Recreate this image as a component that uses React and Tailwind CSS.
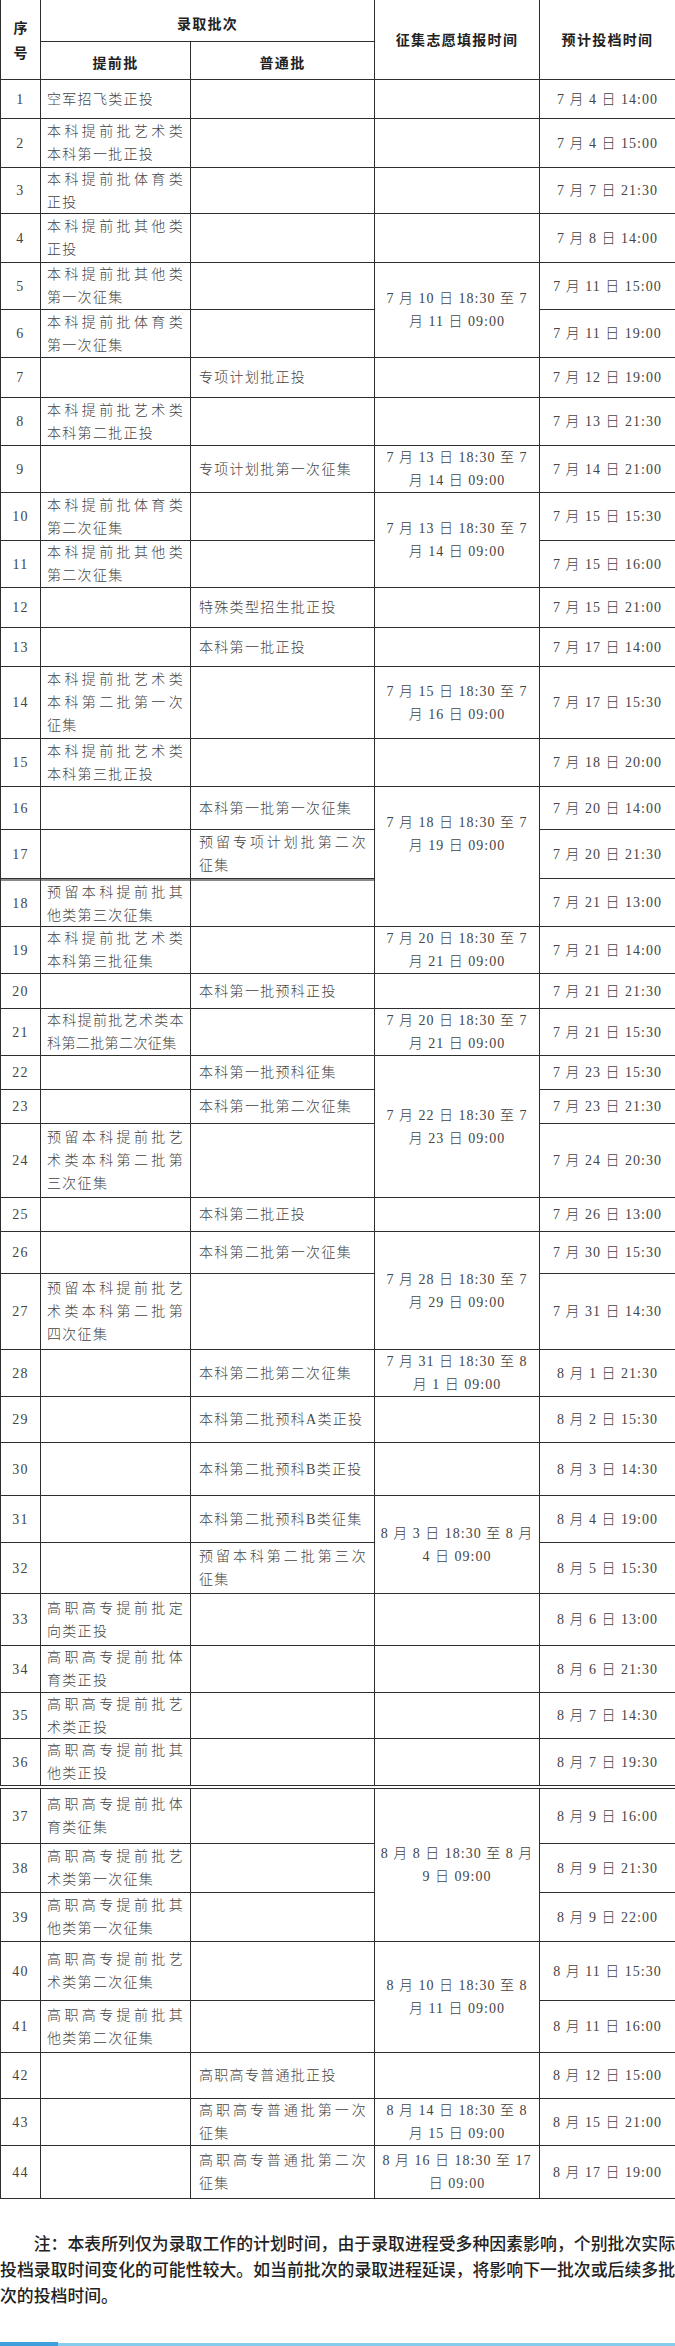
const rows = [
  { a: ['空军招飞类正投'], t: '7 月 4 日 14:00' },
  { a: ['本科提前批艺术类', '本科第一批正投'], t: '7 月 4 日 15:00' },
  { a: ['本科提前批体育类', '正投'], t: '7 月 7 日 21:30' },
  { a: ['本科提前批其他类', '正投'], t: '7 月 8 日 14:00' },
  { a: ['本科提前批其他类', '第一次征集'], t: '7 月 11 日 15:00' },
  { a: ['本科提前批体育类', '第一次征集'], t: '7 月 11 日 19:00' },
  { b: ['专项计划批正投'], t: '7 月 12 日 19:00' },
  { a: ['本科提前批艺术类', '本科第二批正投'], t: '7 月 13 日 21:30' },
  { b: ['专项计划批第一次征集'], t: '7 月 14 日 21:00' },
  { a: ['本科提前批体育类', '第二次征集'], t: '7 月 15 日 15:30' },
  { a: ['本科提前批其他类', '第二次征集'], t: '7 月 15 日 16:00' },
  { b: ['特殊类型招生批正投'], t: '7 月 15 日 21:00' },
  { b: ['本科第一批正投'], t: '7 月 17 日 14:00' },
  { a: ['本科提前批艺术类', '本科第二批第一次', '征集'], t: '7 月 17 日 15:30' },
  { a: ['本科提前批艺术类', '本科第三批正投'], t: '7 月 18 日 20:00' },
  { b: ['本科第一批第一次征集'], t: '7 月 20 日 14:00' },
  { b: ['预留专项计划批第二次', '征集'], t: '7 月 20 日 21:30' },
  { a: ['预留本科提前批其', '他类第三次征集'], t: '7 月 21 日 13:00', dbl: true },
  { a: ['本科提前批艺术类', '本科第三批征集'], t: '7 月 21 日 14:00' },
  { b: ['本科第一批预科正投'], t: '7 月 21 日 21:30' },
  { a: ['本科提前批艺术类本', '科第二批第二次征集'], t: '7 月 21 日 15:30', tight: true },
  { b: ['本科第一批预科征集'], t: '7 月 23 日 15:30' },
  { b: ['本科第一批第二次征集'], t: '7 月 23 日 21:30' },
  { a: ['预留本科提前批艺', '术类本科第二批第', '三次征集'], t: '7 月 24 日 20:30' },
  { b: ['本科第二批正投'], t: '7 月 26 日 13:00' },
  { b: ['本科第二批第一次征集'], t: '7 月 30 日 15:30' },
  { a: ['预留本科提前批艺', '术类本科第二批第', '四次征集'], t: '7 月 31 日 14:30' },
  { b: ['本科第二批第二次征集'], t: '8 月 1 日 21:30' },
  { b: ['本科第二批预科A类正投'], t: '8 月 2 日 15:30' },
  { b: ['本科第二批预科B类正投'], t: '8 月 3 日 14:30' },
  { b: ['本科第二批预科B类征集'], t: '8 月 4 日 19:00' },
  { b: ['预留本科第二批第三次', '征集'], t: '8 月 5 日 15:30' },
  { a: ['高职高专提前批定', '向类正投'], t: '8 月 6 日 13:00' },
  { a: ['高职高专提前批体', '育类正投'], t: '8 月 6 日 21:30' },
  { a: ['高职高专提前批艺', '术类正投'], t: '8 月 7 日 14:30' },
  { a: ['高职高专提前批其', '他类正投'], t: '8 月 7 日 19:30', low: true },
  { a: ['高职高专提前批体', '育类征集'], t: '8 月 9 日 16:00' },
  { a: ['高职高专提前批艺', '术类第一次征集'], t: '8 月 9 日 21:30' },
  { a: ['高职高专提前批其', '他类第一次征集'], t: '8 月 9 日 22:00' },
  { a: ['高职高专提前批艺', '术类第二次征集'], t: '8 月 11 日 15:30' },
  { a: ['高职高专提前批其', '他类第二次征集'], t: '8 月 11 日 16:00' },
  { b: ['高职高专普通批正投'], t: '8 月 12 日 15:00' },
  { b: ['高职高专普通批第一次', '征集'], t: '8 月 15 日 21:00' },
  { b: ['高职高专普通批第二次', '征集'], t: '8 月 17 日 19:00' },
];

// 征集志愿填报时间 column, keyed by row number
const fill = {
  5: { span: 2, lines: ['7 月 10 日 18:30 至 7', '月 11 日 09:00'] },
  9: { span: 1, lines: ['7 月 13 日 18:30 至 7', '月 14 日 09:00'] },
  10: { span: 2, lines: ['7 月 13 日 18:30 至 7', '月 14 日 09:00'] },
  14: { span: 1, lines: ['7 月 15 日 18:30 至 7', '月 16 日 09:00'] },
  16: { span: 3, lines: ['7 月 18 日 18:30 至 7', '月 19 日 09:00'], top: true },
  19: { span: 1, lines: ['7 月 20 日 18:30 至 7', '月 21 日 09:00'] },
  21: { span: 1, lines: ['7 月 20 日 18:30 至 7', '月 21 日 09:00'] },
  22: { span: 3, lines: ['7 月 22 日 18:30 至 7', '月 23 日 09:00'] },
  26: { span: 2, lines: ['7 月 28 日 18:30 至 7', '月 29 日 09:00'] },
  28: { span: 1, lines: ['7 月 31 日 18:30 至 8', '月 1 日 09:00'] },
  31: { span: 2, lines: ['8 月 3 日 18:30 至 8 月', '4 日 09:00'] },
  37: { span: 3, lines: ['8 月 8 日 18:30 至 8 月', '9 日 09:00'] },
  40: { span: 2, lines: ['8 月 10 日 18:30 至 8', '月 11 日 09:00'] },
  43: { span: 1, lines: ['8 月 14 日 18:30 至 8', '月 15 日 09:00'] },
  44: { span: 1, lines: ['8 月 16 日 18:30 至 17', '日 09:00'] },
};
const covered = new Set([6, 11, 17, 18, 23, 24, 27, 32, 38, 39, 41]);

function Lines({ lines, className }) {
  return (
    <div className={`bg-white flex flex-col ${className}`}>
      {lines.map((l, i) => (
        <div
          key={i}
          className={i < lines.length - 1 ? 'text-justify [text-align-last:justify]' : ''}
        >
          {l}
        </div>
      ))}
    </div>
  );
}

function Row({ r, n }) {
  const f = fill[n];
  const dbl = r.dbl ? 'border-t-2 border-[#8a8a8a]' : '';
  return (
    <>
      <div className={`bg-white flex items-center justify-center ${dbl}`}>{n}</div>
      <Lines
        lines={r.a || []}
        className={`pl-[6px] pr-[6px] ${r.low ? 'justify-end' : 'justify-center'} ${
          r.tight ? 'tracking-[0.4px]' : ''
        } ${dbl}`}
      />
      <Lines lines={r.b || []} className={`pl-[8px] pr-[7px] justify-center ${dbl}`} />
      {covered.has(n) ? null : f ? (
        <div
          className={`bg-white flex flex-col items-center text-center tracking-[1px] ${
            f.span === 3 ? 'row-span-3' : f.span === 2 ? 'row-span-2' : ''
          } ${f.top ? 'justify-start pt-[24px]' : 'justify-center'}`}
        >
          {f.lines.map((l, i) => (
            <div key={i}>{l}</div>
          ))}
        </div>
      ) : (
        <div className="bg-white" />
      )}
      <div className="bg-white flex items-center justify-center tracking-[1px]">{r.t}</div>
    </>
  );
}

export default function App() {
  return (
    <div className="w-[675px] bg-white">
      <div className="font-['Liberation_Serif','Noto_Sans_CJK_SC',serif] font-light text-[14px] leading-[23px] text-[#444] tracking-[1.3px]">
        <div className="grid grid-cols-[39px_149px_183px_164px_135px] grid-rows-[41px_37px_38px_48px_45px_48px_46px_47px_39px_47px_46px_47px_46px_39px_38px_71px_47px_42px_48px_47px_46px_34px_46px_33px_33px_73px_33px_41px_75px_46px_45px_52px_46px_50px_51px_46px_45px_46px] gap-px bg-[#2e2e2e] pl-px pb-px">
          <div className="row-span-2 bg-white flex flex-col items-center justify-center font-['Noto_Sans_CJK_SC',sans-serif] font-bold text-[#222] leading-[25px] tracking-normal">
            <span>序</span>
            <span>号</span>
          </div>
          <div className="col-span-2 bg-white flex items-center justify-center pt-[6px] font-['Noto_Sans_CJK_SC',sans-serif] font-bold text-[#222]">
            录取批次
          </div>
          <div className="row-span-2 bg-white flex items-center justify-center font-['Noto_Sans_CJK_SC',sans-serif] font-bold text-[#222]">
            征集志愿填报时间
          </div>
          <div className="row-span-2 bg-white flex items-center justify-center font-['Noto_Sans_CJK_SC',sans-serif] font-bold text-[#222]">
            预计投档时间
          </div>
          <div className="bg-white flex items-center justify-center pt-[4px] font-['Noto_Sans_CJK_SC',sans-serif] font-bold text-[#222]">
            提前批
          </div>
          <div className="bg-white flex items-center justify-center pt-[4px] font-['Noto_Sans_CJK_SC',sans-serif] font-bold text-[#222]">
            普通批
          </div>
          {rows.slice(0, 36).map((r, i) => (
            <Row key={i} r={r} n={i + 1} />
          ))}
        </div>

        {/* page break in the source document: second table part */}
        <div className="mt-[2px] grid grid-cols-[39px_149px_183px_164px_135px] grid-rows-[54px_48px_48px_58px_51px_45px_46px_52px] gap-px bg-[#2e2e2e] pl-px pt-px pb-px">
          {rows.slice(36).map((r, i) => (
            <Row key={i} r={r} n={i + 37} />
          ))}
        </div>
      </div>

      <p className="mt-[31px] indent-[2em] text-justify font-['Noto_Sans_CJK_SC',sans-serif] font-medium text-[16.85px] leading-[26px] text-[#222]">
        注：本表所列仅为录取工作的计划时间，由于录取进程受多种因素影响，个别批次实际投档录取时间变化的可能性较大。如当前批次的录取进程延误，将影响下一批次或后续多批次的投档时间。
      </p>

      <div className="mt-[34px] flex h-[4px]">
        <div className="w-[58px] bg-[#3d9fdc]" />
        <div className="flex-1 mt-[1px] h-[3px] bg-[#86ccef]" />
      </div>
    </div>
  );
}
